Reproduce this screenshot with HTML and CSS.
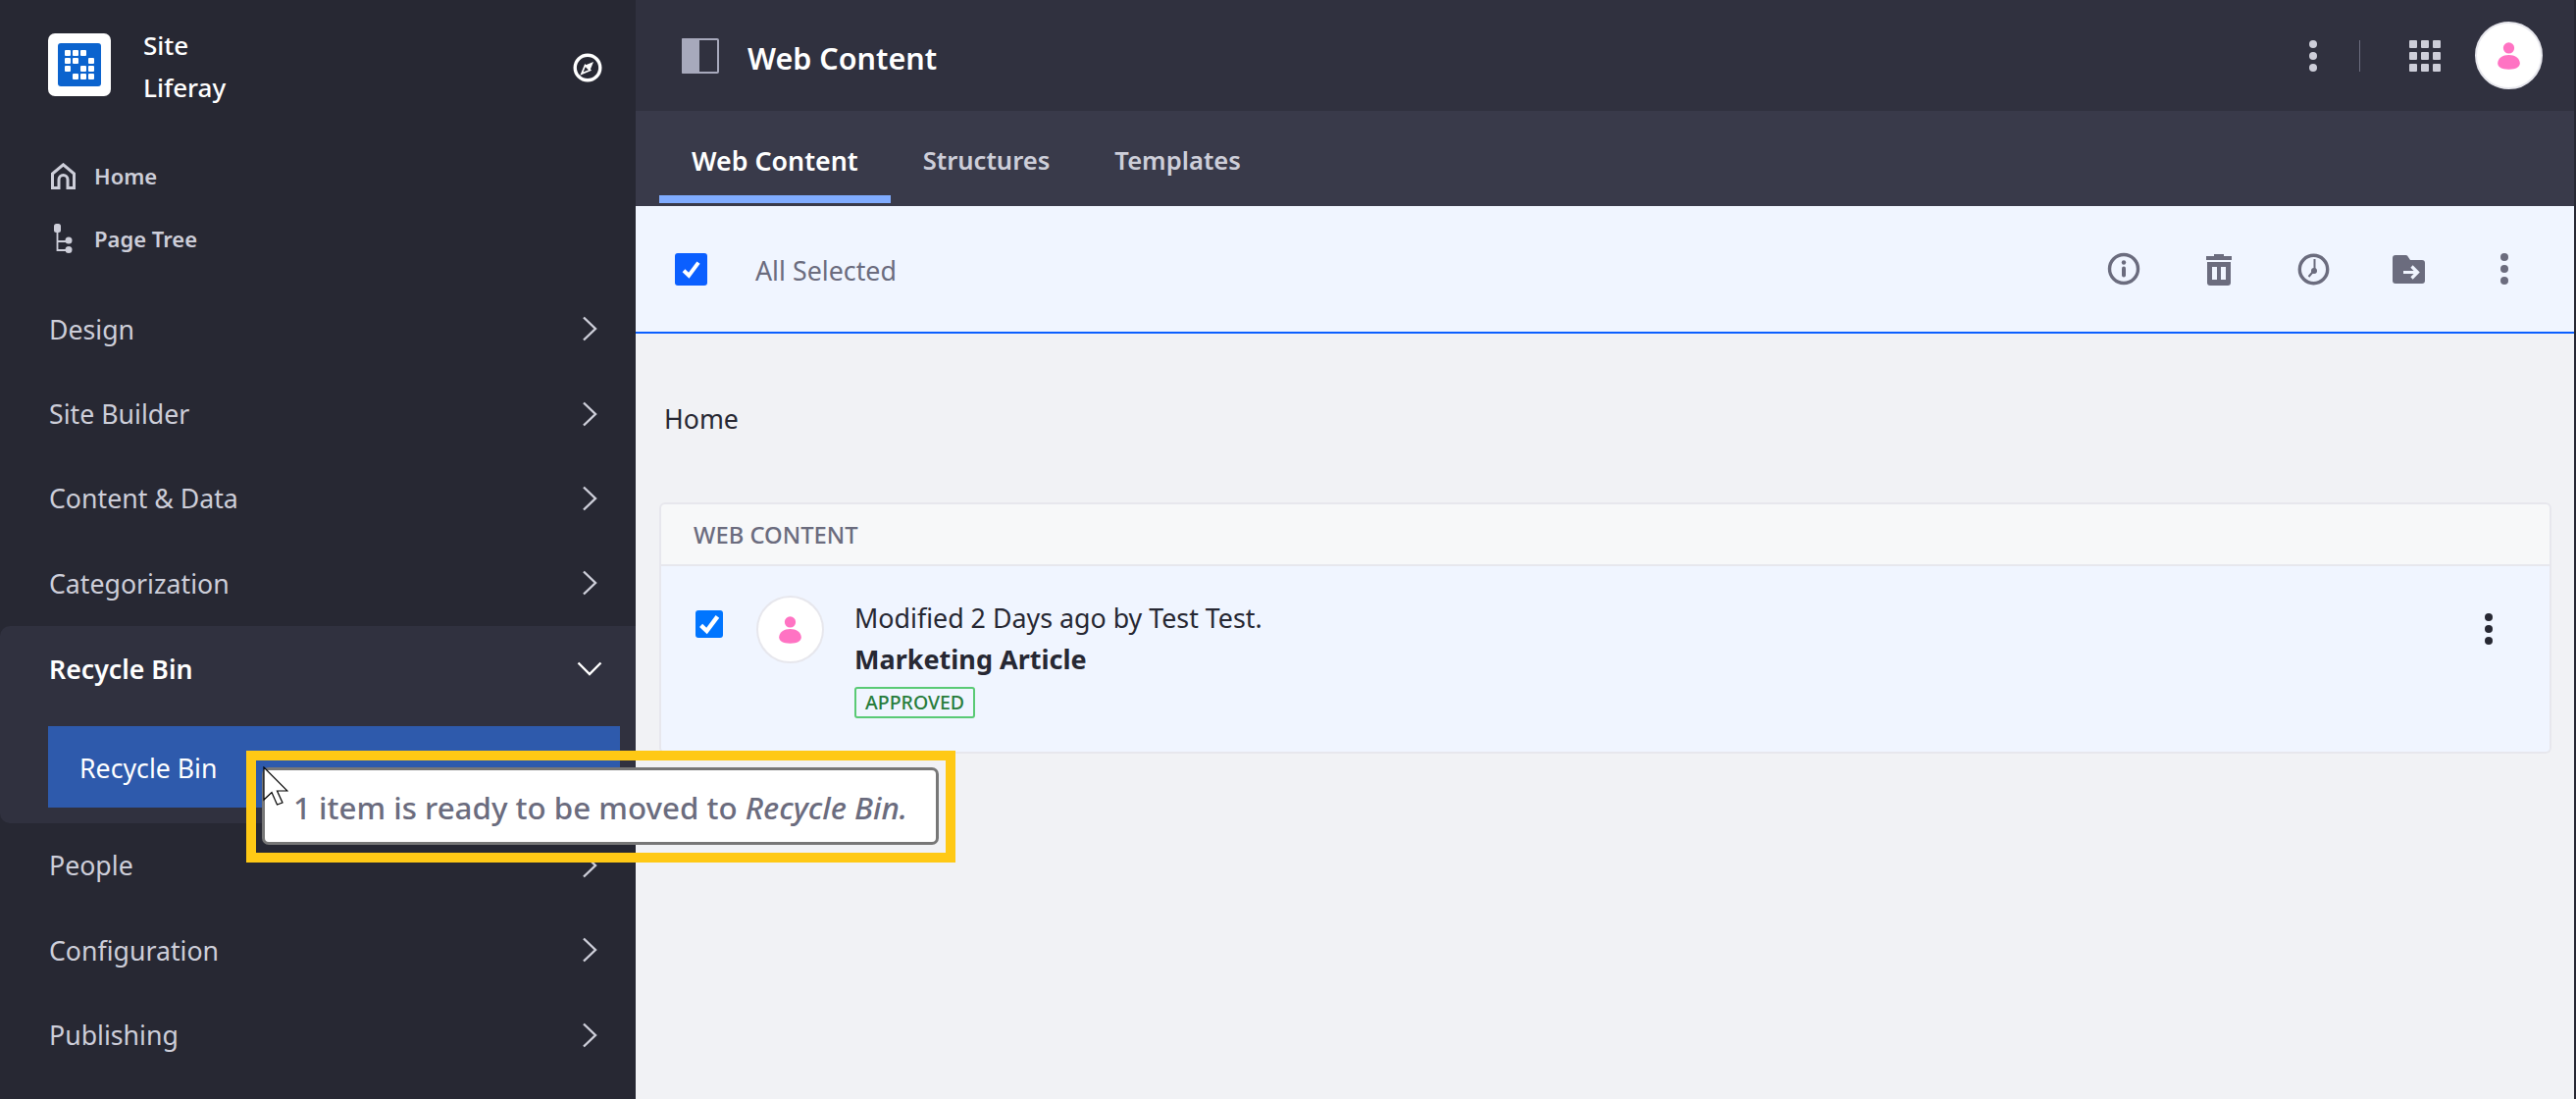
FILE: index.html
```html
<!DOCTYPE html>
<html lang="en">
  <head>
    <meta charset="UTF-8" />
    <meta name="viewport" content="width=device-width, initial-scale=1.0" />
    <title>Web Content</title>
    <link rel="stylesheet" href="styles.css">
  </head>
  <body>
    <svg class="defs" width="0" height="0">
      <symbol id="chevron" viewBox="0 0 16 26">
        <path d="M2 1.5 14 13 2 24.5" fill="none" stroke="currentColor" stroke-width="2.4" />
      </symbol>
      <symbol id="kebab" viewBox="0 0 8 32">
        <circle cx="4" cy="4" r="4" fill="currentColor" />
        <circle cx="4" cy="16" r="4" fill="currentColor" />
        <circle cx="4" cy="28" r="4" fill="currentColor" />
      </symbol>
      <symbol id="user" viewBox="0 0 69 69">
        <circle cx="34.5" cy="26.500" r="6" fill="#ff73c3" />
        <path d="M22.5 43c0-5.500 5.500-9 12-9s12 3.500 12 9c0 4-4 6.500-12 6.500s-12-2.500-12-6.500z" fill="#ff73c3" />
      </symbol>
      <symbol id="check" viewBox="0 0 20 20">
        <path d="M4 11 8.200 15 16 4.500" fill="none" stroke="#fff" stroke-width="3.200" />
      </symbol>
    </svg>

    <aside class="sidebar">
      <div class="brand">
        <span class="logo">
          <svg width="44" height="44" viewBox="0 0 44 44">
            <rect width="44" height="44" rx="3" fill="#0b63ce" />
            <g fill="#fff">
              <rect x="7" y="7" width="6" height="6" rx="1" />
              <rect x="15" y="7" width="6" height="6" rx="1" />
              <rect x="23" y="7" width="6" height="6" rx="1" />
              <rect x="7" y="15" width="6" height="6" rx="1" />
              <rect x="15" y="15" width="6" height="6" rx="1" />
              <rect x="31" y="15" width="6" height="6" rx="1" />
              <rect x="7" y="23" width="6" height="6" rx="1" />
              <rect x="23" y="23" width="6" height="6" rx="1" />
              <rect x="31" y="23" width="6" height="6" rx="1" />
              <rect x="15" y="31" width="6" height="6" rx="1" />
              <rect x="23" y="31" width="6" height="6" rx="1" />
              <rect x="31" y="31" width="6" height="6" rx="1" />
            </g>
          </svg>
        </span>
        <div class="brand-name">Site<br />Liferay</div>
        <svg class="compass" width="30" height="30" viewBox="0 0 30 30">
          <circle cx="15" cy="15" r="12.800" fill="none" stroke="#fff" stroke-width="3.400" />
          <path d="M21 9 17.500 17.500 12.500 12.500z" fill="#fff" />
          <path d="M9 21 12.500 12.500 17.500 17.500z" fill="none" stroke="#fff" stroke-width="1.800" />
        </svg>
      </div>

      <div class="quick-links">
        <a class="quick-link">
          <svg width="25" height="27" viewBox="0 0 25 27">
            <path d="M1.500 27V11L12.500 1.800 23.500 11V25.500H17V17a4.500 4.500 0 0 0-9 0v8.500H1.500" fill="none" stroke="#cdced9" stroke-width="3" />
          </svg>
          Home
        </a>
        <a class="quick-link">
          <svg width="25" height="30" viewBox="0 0 25 30">
            <rect x="3" y="0" width="7" height="9" rx="2.500" fill="#cdced9" />
            <path d="M6.500 8V27H16M6.500 18H16" fill="none" stroke="#cdced9" stroke-width="1.800" />
            <circle cx="18" cy="17" r="3.500" fill="#cdced9" />
            <circle cx="18" cy="26.500" r="3.500" fill="#cdced9" />
          </svg>
          Page Tree
        </a>
      </div>

      <nav class="menu">
        <a class="menu-item">Design <svg class="chevron"><use href="#chevron" /></svg></a>
        <a class="menu-item">Site Builder <svg class="chevron"><use href="#chevron" /></svg></a>
        <a class="menu-item">Content &amp; Data <svg class="chevron"><use href="#chevron" /></svg></a>
        <a class="menu-item">Categorization <svg class="chevron"><use href="#chevron" /></svg></a>
        <div class="menu-group">
          <a class="menu-item menu-item-open">
            Recycle Bin
            <svg class="chevron-down" width="26" height="15" viewBox="0 0 26 15">
              <path d="M1.500 1.500 13 13 24.500 1.500" fill="none" stroke="currentColor" stroke-width="2.400" />
            </svg>
          </a>
          <a class="submenu-item">Recycle Bin</a>
        </div>
        <a class="menu-item">People <svg class="chevron"><use href="#chevron" /></svg></a>
        <a class="menu-item">Configuration <svg class="chevron"><use href="#chevron" /></svg></a>
        <a class="menu-item">Publishing <svg class="chevron"><use href="#chevron" /></svg></a>
      </nav>
    </aside>

    <main class="main">
      <header class="topbar">
        <svg class="panel-icon" width="38" height="36" viewBox="0 0 38 36">
          <rect x="1" y="1" width="36" height="34" rx="1" fill="none" stroke="#a7a9bc" stroke-width="2" />
          <rect x="0" y="0" width="18" height="36" rx="1" fill="#a7a9bc" />
        </svg>
        <h1 class="page-title">Web Content</h1>
        <svg class="topbar-kebab"><use href="#kebab" /></svg>
        <span class="topbar-divider"></span>
        <svg class="apps" width="32" height="32" viewBox="0 0 32 32">
          <g fill="#cdced9">
            <rect width="8" height="8" rx="1" />
            <rect x="12" width="8" height="8" rx="1" />
            <rect x="24" width="8" height="8" rx="1" />
            <rect y="12" width="8" height="8" rx="1" />
            <rect x="12" y="12" width="8" height="8" rx="1" />
            <rect x="24" y="12" width="8" height="8" rx="1" />
            <rect y="24" width="8" height="8" rx="1" />
            <rect x="12" y="24" width="8" height="8" rx="1" />
            <rect x="24" y="24" width="8" height="8" rx="1" />
          </g>
        </svg>
        <span class="avatar avatar-top"><svg><use href="#user" /></svg></span>
      </header>

      <div class="tabs">
        <a class="tab tab-active">Web Content</a>
        <a class="tab">Structures</a>
        <a class="tab">Templates</a>
      </div>

      <div class="toolbar">
        <span class="check check-toolbar"><svg><use href="#check" /></svg></span>
        <span class="toolbar-label">All Selected</span>
        <div class="toolbar-icons">
          <svg width="34" height="34" viewBox="0 0 34 34">
            <circle cx="17" cy="17" r="14.500" fill="none" stroke="#6b6c7e" stroke-width="3.400" />
            <circle cx="17" cy="10.500" r="2.200" fill="#6b6c7e" />
            <rect x="15" y="14.500" width="4" height="11" rx="2" fill="#6b6c7e" />
          </svg>
          <svg width="26" height="33" viewBox="0 0 26 33">
            <path d="M0 3h8V1h10v2h8v4H0z" fill="#6b6c7e" />
            <path d="M1 9h24v21a3 3 0 0 1-3 3H4a3 3 0 0 1-3-3z" fill="#6b6c7e" />
            <rect x="6" y="14" width="5" height="13" fill="#f0f5ff" />
            <rect x="15" y="14" width="5" height="13" fill="#f0f5ff" />
          </svg>
          <svg width="33" height="33" viewBox="0 0 33 33">
            <circle cx="16.500" cy="16.500" r="14.200" fill="none" stroke="#6b6c7e" stroke-width="3.400" />
            <path d="M17.500 6V17.500M17.500 17 11.500 24" fill="none" stroke="#6b6c7e" stroke-width="2" />
            <circle cx="17" cy="18" r="3" fill="#6b6c7e" />
          </svg>
          <svg width="33" height="29" viewBox="0 0 33 29">
            <path d="M0 3a3 3 0 0 1 3-3h10a3 3 0 0 1 3 2l2 3h12a3 3 0 0 1 3 3v18a3 3 0 0 1-3 3H3a3 3 0 0 1-3-3z" fill="#6b6c7e" />
            <path d="M11 17.500H25M19.500 11.500 25.500 17.500 19.500 23.500" fill="none" stroke="#f0f5ff" stroke-width="3.200" />
          </svg>
          <svg class="toolbar-kebab"><use href="#kebab" /></svg>
        </div>
      </div>

      <div class="content">
        <div class="breadcrumb">Home</div>

        <section class="list">
          <div class="list-header">WEB CONTENT</div>
          <div class="list-row">
            <span class="check check-row"><svg><use href="#check" /></svg></span>
            <span class="avatar avatar-row"><svg><use href="#user" /></svg></span>
            <div class="row-text">
              <div class="row-meta">Modified 2 Days ago by Test Test.</div>
              <div class="row-title">Marketing Article</div>
              <span class="label-approved">APPROVED</span>
            </div>
            <svg class="row-kebab"><use href="#kebab" /></svg>
          </div>
        </section>
      </div>
    </main>

    <!-- highlight drawn over the screenshot -->
    <div class="callout">
      <div class="callout-box">1 item is ready to be moved to&nbsp;<em>Recycle Bin.</em></div>
      <svg class="cursor" width="26" height="40" viewBox="0 0 26 40">
        <path d="M1 1V34L9 26.500 14.500 39 20 37 14.500 25H25z" fill="#fff" stroke="#000" stroke-width="1.200" />
      </svg>
    </div>
  </body>
</html>
```

FILE: styles.css
```css
* {
  box-sizing: border-box;
}

html,
body {
  height: 100%;
}

body {
  margin: 0;
  display: flex;
  height: 1120px;
  overflow: hidden;
  background: #272833;
  font-family: "Noto Sans", sans-serif;
  color: #272833;
  position: relative;
}

.defs {
  position: absolute;
}

/* sidebar */

.sidebar {
  width: 648px;
  flex: none;
  background: #272833;
  color: #cdced9;
}

.brand {
  display: flex;
  align-items: center;
  height: 64px;
  margin: 34px 34px 0 49px;
}

.logo {
  width: 64px;
  height: 64px;
  background: #fff;
  border-radius: 7px;
  display: flex;
  align-items: center;
  justify-content: center;
}

.brand-name {
  margin: 4px 0 0 33px;
  font-size: 26px;
  font-weight: 500;
  line-height: 43px;
  color: #fff;
}

.compass {
  margin: 5px 0 0 auto;
}

.quick-links {
  margin-top: 49px;
  margin-bottom: 17px;
}

.quick-link {
  display: flex;
  align-items: center;
  gap: 19px;
  height: 64px;
  padding-left: 52px;
  font-size: 22px;
  font-weight: 600;
}

.menu-item {
  display: flex;
  align-items: center;
  justify-content: space-between;
  height: 86.4px;
  padding: 0 39px 0 50px;
  font-size: 26.700px;
}

.chevron {
  width: 16px;
  height: 26px;
}

.menu-group {
  background: #30313f;
  border-radius: 10px 0 0 10px;
  height: 201px;
}

.menu-item-open {
  height: 87px;
  padding-right: 34px;
  font-weight: 600;
  color: #fff;
}

.submenu-item {
  display: flex;
  align-items: center;
  height: 83px;
  margin: 15px 16px 0 49px;
  padding: 2px 0 0 32px;
  background: #2e5aac;
  color: #fff;
  font-size: 26.700px;
}

/* main column */

.main {
  flex: 1;
  min-width: 0;
  margin-right: 2px;
  background: #f1f2f5;
  display: flex;
  flex-direction: column;
}

.topbar {
  display: flex;
  align-items: center;
  height: 113px;
  padding: 0 32px 0 47px;
  background: #30313f;
}

.page-title {
  margin: 0 0 0 29px;
  padding-top: 4px;
  font-size: 30.500px;
  font-weight: 600;
  color: #fff;
}

.topbar-kebab {
  width: 8px;
  height: 32px;
  margin-left: auto;
  color: #cdced9;
}

.topbar-divider {
  width: 1px;
  height: 32px;
  margin: 0 50px 0 43px;
  background: #6b6c7e;
}

.avatar {
  display: flex;
  border-radius: 50%;
  background: #fff;
  border: 2px solid #e7e7ed;
}

.avatar svg {
  width: 100%;
  height: 100%;
}

.avatar-top {
  width: 69px;
  height: 69px;
  margin-left: 35px;
}

.tabs {
  display: flex;
  height: 97px;
  padding-left: 24px;
  background: #393a4a;
}

.tab {
  display: flex;
  align-items: center;
  height: 94px;
  padding: 6px 33px 0;
  font-size: 25.600px;
  font-weight: 600;
  color: #cdced9;
}

.tab-active {
  color: #fff;
  border-bottom: 8px solid #80acff;
  padding-top: 14px;
  font-size: 26.800px;
}

.toolbar {
  display: flex;
  align-items: center;
  height: 130px;
  padding-left: 40px;
  background: #f0f5ff;
  border-bottom: 2px solid #0b5fff;
}

.check {
  display: flex;
  flex: none;
  border-radius: 3px;
}

.check svg {
  width: 100%;
  height: 100%;
}

.check-toolbar {
  width: 33px;
  height: 33px;
  padding: 4px;
  background: #0b5fff;
}

.toolbar-label {
  margin-left: 49px;
  padding-top: 2px;
  font-size: 26.800px;
  color: #6b6c7e;
}

.toolbar-icons {
  display: grid;
  grid-template-columns: repeat(5, 97px);
  align-items: center;
  justify-items: center;
  margin-left: auto;
  margin-right: 23px;
}

.toolbar-kebab {
  width: 8px;
  height: 32px;
  color: #6b6c7e;
}

.content {
  padding: 0 23px 0 24px;
}

.breadcrumb {
  margin: 69px 0 0 5px;
  height: 36px;
  font-size: 26.700px;
  line-height: 36px;
}

.list {
  margin-top: 67px;
}

.list-header {
  display: flex;
  align-items: center;
  height: 65px;
  padding-left: 33px;
  background: #f7f8f9;
  border: 2px solid #e7e7ed;
  border-radius: 6px 6px 0 0;
  font-size: 23.800px;
  font-weight: 500;
  color: #6b6c7e;
}

.list-row {
  display: flex;
  align-items: flex-start;
  height: 191px;
  padding: 30px 0 0 35px;
  background: #f0f5ff;
  border: 2px solid #e7e7ed;
  border-top: 0;
  border-radius: 0 0 6px 6px;
}

.check-row {
  width: 28px;
  height: 28px;
  margin-top: 15px;
  background: #0075ff;
}

.avatar-row {
  width: 69px;
  height: 69px;
  margin-left: 34px;
}

.row-text {
  margin: 2px 0 0 31px;
  display: flex;
  flex-direction: column;
  align-items: flex-start;
}

.row-meta {
  font-size: 26.800px;
  line-height: 42px;
}

.row-title {
  font-size: 27px;
  font-weight: 700;
  line-height: 42px;
}

.label-approved {
  margin-top: 7px;
  height: 32px;
  padding: 0 9px;
  border: 2px solid #5aca75;
  border-radius: 3px;
  font-size: 19.500px;
  font-weight: 500;
  line-height: 28px;
  color: #287d3c;
}

.row-kebab {
  width: 8px;
  height: 32px;
  margin: 18px 58px 0 auto;
}

/* annotation on top of the page */

.callout {
  position: absolute;
  left: 251px;
  top: 765px;
  width: 723px;
  height: 114px;
  border: 10px solid #ffc915;
}

.callout-box {
  position: absolute;
  left: 6px;
  top: 7px;
  width: 690px;
  height: 79px;
  display: flex;
  align-items: center;
  padding: 2px 0 0 29px;
  background: #fff;
  border: 3px solid #777;
  border-radius: 7px;
  font-size: 31.300px;
  font-weight: 500;
  color: #6b6c7e;
  white-space: nowrap;
}

.cursor {
  position: absolute;
  left: 7px;
  top: 6px;
}
```
